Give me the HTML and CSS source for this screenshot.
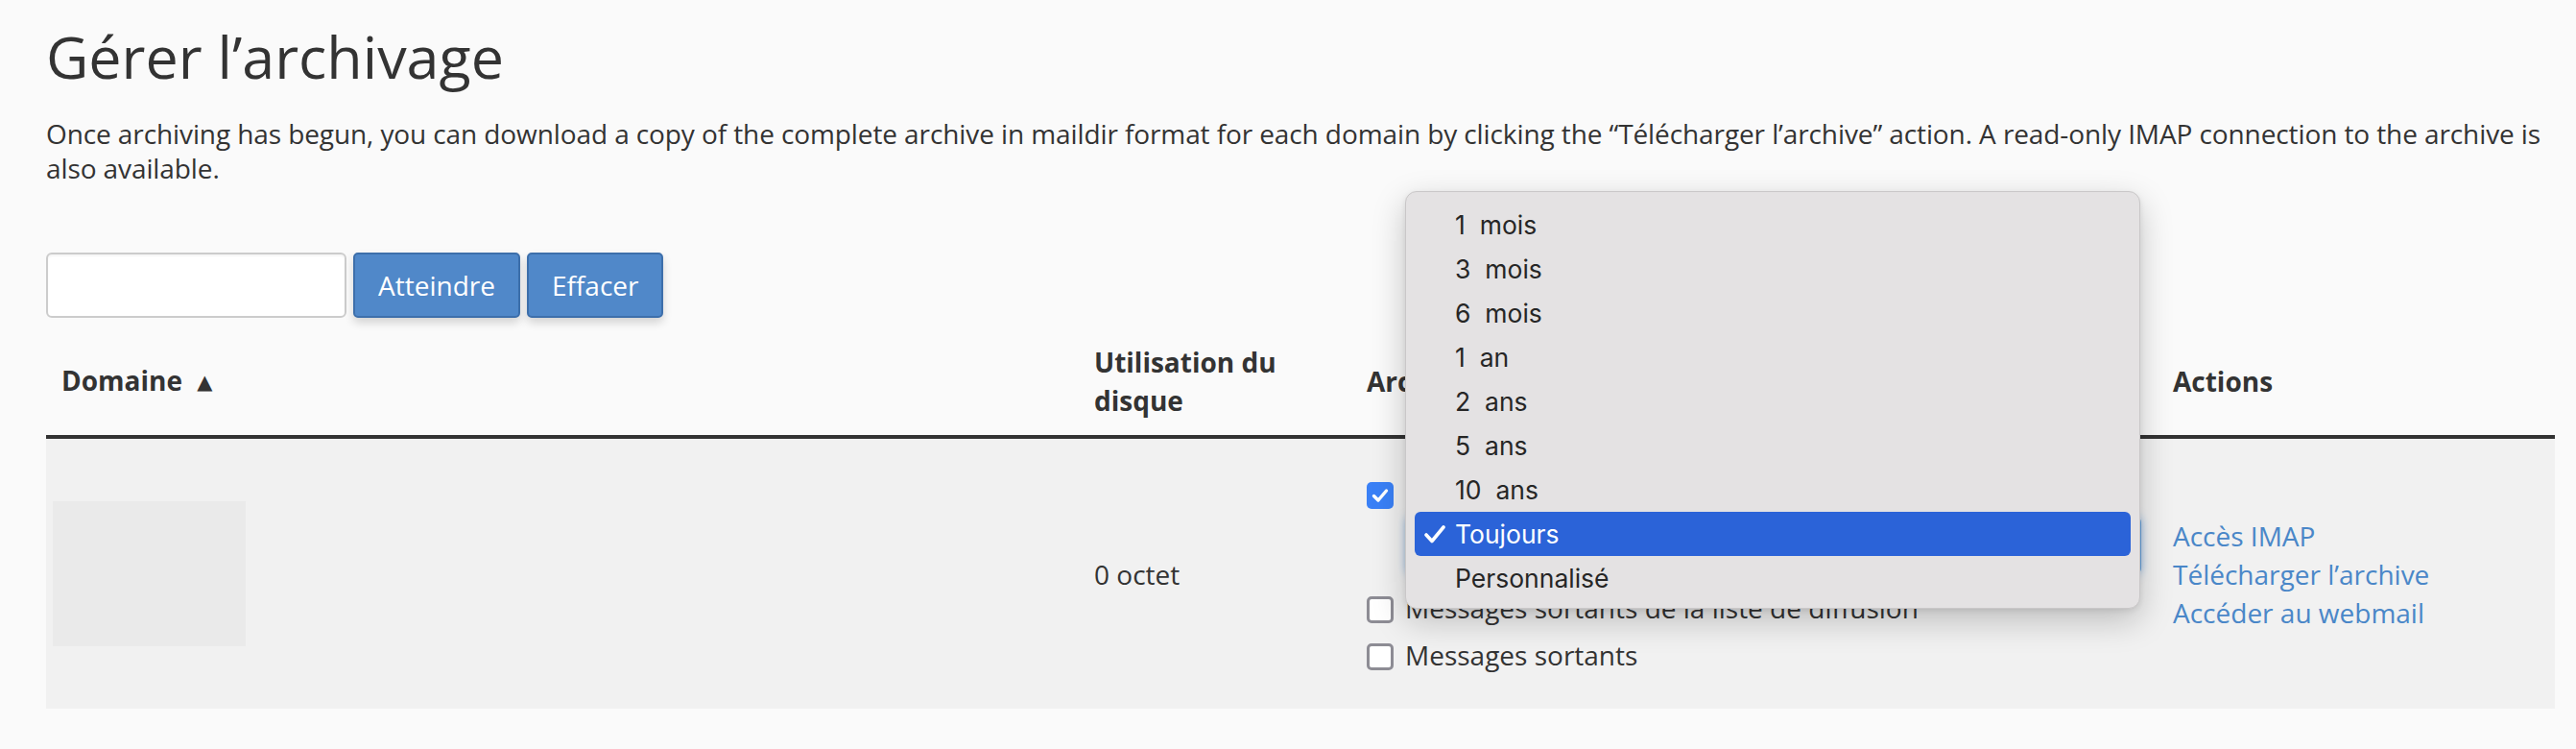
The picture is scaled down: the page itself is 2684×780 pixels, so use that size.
FILE: index.html
```html
<!DOCTYPE html>
<html lang="fr">
<head>
<meta charset="utf-8">
<title>Gérer l’archivage</title>
<link rel="stylesheet" href="styles.css">
</head>
<body>
<div class="page">
  <h1 class="title">Gérer l’archivage</h1>
  <p class="intro">Once archiving has begun, you can download a copy of the complete archive in maildir format for each domain by clicking the “Télécharger l’archive” action. A read-only IMAP connection to the archive is also available.</p>

  <form class="search">
    <input class="search-input" type="text" aria-label="Rechercher">
    <button class="btn" type="button">Atteindre</button>
    <button class="btn" type="button">Effacer</button>
  </form>

  <table class="grid">
    <colgroup>
      <col class="c-domain">
      <col class="c-disk">
      <col class="c-archive">
      <col class="c-actions">
    </colgroup>
    <thead>
      <tr>
        <th>Domaine <span class="sort">▲</span></th>
        <th>Utilisation du disque</th>
        <th>Archiver</th>
        <th>Actions</th>
      </tr>
    </thead>
    <tbody>
      <tr class="row">
        <td class="cell-domain"><div class="domain-ph"></div></td>
        <td>0 octet</td>
        <td>
          <div class="opt opt-first">
            <span class="cb cb-on"><svg width="28" height="28" viewBox="0 0 28 28"><path d="M7.5 14.5 L12 19 L20.5 9" fill="none" stroke="#fff" stroke-width="3.4" stroke-linecap="round" stroke-linejoin="round"/></svg></span>
            <span>Messages entrants</span>
          </div>
          <div class="retention-select">Toujours</div>
          <div class="opt">
            <span class="cb"></span>
            <span>Messages sortants de la liste de diffusion</span>
          </div>
          <div class="opt opt-last">
            <span class="cb"></span>
            <span>Messages sortants</span>
          </div>
        </td>
        <td class="actions">
          <a href="#">Accès IMAP</a><br>
          <a href="#">Télécharger l’archive</a><br>
          <a href="#">Accéder au webmail</a>
        </td>
      </tr>
    </tbody>
  </table>

  <ul class="menu">
    <li class="item">1&nbsp;&nbsp;mois</li>
    <li class="item">3&nbsp;&nbsp;mois</li>
    <li class="item">6&nbsp;&nbsp;mois</li>
    <li class="item">1&nbsp;&nbsp;an</li>
    <li class="item">2&nbsp;&nbsp;ans</li>
    <li class="item">5&nbsp;&nbsp;ans</li>
    <li class="item">10&nbsp;&nbsp;ans</li>
    <li class="item item-selected"><svg class="tick" width="22" height="19" viewBox="0 0 22 19"><path d="M2 10 L8 16.5 L20 2" fill="none" stroke="#fff" stroke-width="3.6" stroke-linecap="round" stroke-linejoin="round"/></svg>Toujours</li>
    <li class="item">Personnalisé</li>
  </ul>
</div>
</body>
</html>
```

FILE: styles.css
```css
* { box-sizing: border-box; }

html, body {
  margin: 0;
  background: #fafafa;
}

body {
  font-family: "Open Sans", "DejaVu Sans", sans-serif;
  color: #333333;
}

.page {
  position: relative;
  width: 2684px;
  padding: 0 22px 0 48px;
}

.title {
  margin: 0;
  padding-top: 26px;
  font-size: 61px;
  line-height: 66px;
  font-weight: 400;
  color: #333333;
}

.intro {
  margin: 29px 0 0;
  font-size: 28px;
  line-height: 36px;
  letter-spacing: -0.1px;
}

.search {
  display: flex;
  gap: 7px;
  margin: 70px 0 0;
}

.search-input {
  width: 313px;
  height: 68px;
  border: 2px solid #cccccc;
  border-radius: 6px;
  background: #ffffff;
  box-shadow: inset 0 2px 2px rgba(0, 0, 0, 0.04);
  font: 28px "Open Sans", sans-serif;
  padding: 0 14px;
}

.btn {
  height: 68px;
  padding: 0 24px;
  border: 2px solid #3d6fab;
  border-radius: 5px;
  background: #5088c9;
  color: #ffffff;
  font: 400 28px/40px "Open Sans", sans-serif;
  box-shadow: 0 5px 10px rgba(0, 0, 0, 0.16);
}

.grid {
  width: 2614px;
  margin-top: 10px;
  border-collapse: collapse;
  table-layout: fixed;
}

.c-domain { width: 1076px; }
.c-disk { width: 284px; }
.c-archive { width: 840px; }
.c-actions { width: 414px; }

.grid th {
  padding: 16px;
  font-size: 28px;
  line-height: 40px;
  font-weight: 700;
  text-align: left;
  vertical-align: middle;
  border-bottom: 4px solid #333333;
  color: #333333;
}

.sort {
  font-size: 21px;
  margin-left: 8px;
  position: relative;
  top: -2px;
}

.grid td {
  padding: 16px;
  font-size: 28px;
  line-height: 40px;
  vertical-align: middle;
  background: #f1f1f1;
  color: #333333;
}

.row { height: 283px; }

.grid td.cell-domain { padding-left: 7px; }

.domain-ph {
  width: 201px;
  height: 151px;
  background: #eaeaea;
}

.opt {
  display: flex;
  align-items: flex-start;
  gap: 12px;
  height: 40px;
  margin-bottom: 9px;
  white-space: nowrap;
}

.opt-first { margin-bottom: 4px; }
.opt-last { margin-bottom: 0; }

.cb {
  flex: none;
  width: 28px;
  height: 28px;
  margin-top: 8px;
  border: 3px solid #8d8c94;
  border-radius: 5px;
  background: #ffffff;
}

.cb-on {
  border: none;
  background: #3a80f6;
}

.cb-on svg { display: block; }

.retention-select {
  width: 766px;
  height: 60px;
  margin: 0 0 15px 41px;
  padding: 0 16px;
  border: 2px solid #66a4e0;
  border-radius: 6px;
  background: #ffffff;
  box-shadow: 0 0 10px rgba(80, 150, 225, 0.55);
  line-height: 56px;
}

.actions a {
  color: #4a87c8;
  text-decoration: none;
}

.menu {
  position: absolute;
  left: 1464px;
  top: 199px;
  width: 766px;
  margin: 0;
  padding: 11px 0 8px;
  list-style: none;
  background: #e4e2e3;
  border: 1px solid #c9c7c8;
  border-radius: 12px;
  box-shadow: 0 12px 34px rgba(0, 0, 0, 0.22), 0 2px 6px rgba(0, 0, 0, 0.08);
  font-family: Inter, "Noto Sans", sans-serif;
  font-size: 26.5px;
  color: #262626;
}

.item {
  position: relative;
  height: 46px;
  line-height: 46px;
  margin: 0 9px;
  padding-left: 42px;
  border-radius: 6px;
  white-space: nowrap;
}

.item-selected {
  background: #2b63d8;
  color: #ffffff;
}

.tick {
  position: absolute;
  left: 10px;
  top: 14px;
}
```
